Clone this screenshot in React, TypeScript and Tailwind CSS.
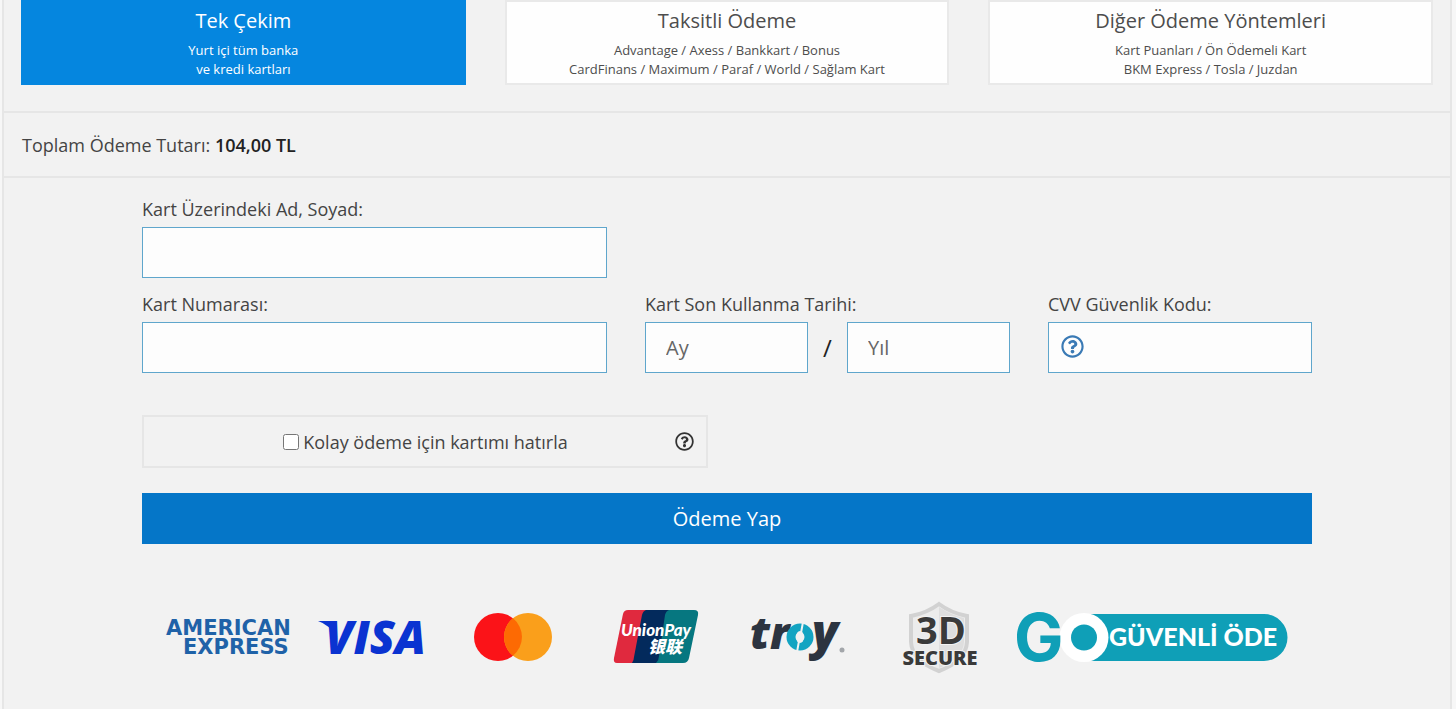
import { FaRegQuestionCircle } from "react-icons/fa";

const tabs = [
  {
    title: "Tek Çekim",
    lines: ["Yurt içi tüm banka", "ve kredi kartları"],
    active: true,
  },
  {
    title: "Taksitli Ödeme",
    lines: [
      "Advantage / Axess / Bankkart / Bonus",
      "CardFinans / Maximum / Paraf / World / Sağlam Kart",
    ],
    active: false,
  },
  {
    title: "Diğer Ödeme Yöntemleri",
    lines: ["Kart Puanları / Ön Ödemeli Kart", "BKM Express / Tosla / Juzdan"],
    active: false,
  },
];

const inputClass =
  "h-[51px] w-full min-w-0 border border-[#5fa6cc] bg-[#fdfdfd] px-5 text-xl text-[#444] placeholder:text-[#666] outline-none";

const labelClass = "mb-[5px] block text-lg leading-[26px]";

const PaymentTabs = () => {
  return (
    <div className="grid grid-cols-3 gap-[39px] px-[17px] pb-[26px]">
      {tabs.map((tab) => (
        <button
          key={tab.title}
          type="button"
          className={
            tab.active
              ? "h-[85px] border-2 border-[#0586df] bg-[#0586df] text-white"
              : "h-[85px] border-2 border-[#e9e9e9] bg-[#fefefe] text-[#4d4d4d]"
          }
        >
          <span className="mb-[6px] block text-xl leading-[28px]">{tab.title}</span>
          {tab.lines.map((line) => (
            <span key={line} className="block text-[13px] leading-[19px]">
              {line}
            </span>
          ))}
        </button>
      ))}
    </div>
  );
};

const AmexLogo = () => (
  <svg width="126" height="80" viewBox="0 -5 126 80" role="img" aria-label="American Express">
    <g fill="#1f62a8" fontFamily="'DejaVu Sans', sans-serif" fontWeight="700" fontSize="21">
      <text x="1" y="33">AMERICAN</text>
      <text x="18" y="52">EXPRESS</text>
    </g>
  </svg>
);

const VisaLogo = () => (
  <svg width="110" height="80" viewBox="0 -5 110 80" role="img" aria-label="Visa">
    <path d="M2 19 H16 L19 34 Q14 23 2 19 Z" fill="#0a33d1" />
    <text
      x="9"
      y="52"
      fill="#0a33d1"
      fontFamily="'Open Sans', sans-serif"
      fontStyle="italic"
      fontWeight="800"
      fontSize="46"
    >
      VISA
    </text>
  </svg>
);

const MastercardLogo = () => (
  <svg width="80" height="80" viewBox="0 -5 80 80" role="img" aria-label="Mastercard">
    <circle cx="25" cy="35" r="24" fill="#fb1318" />
    <circle cx="55" cy="35" r="24" fill="#fa9f1b" />
    <path d="M40 16.3 A24 24 0 0 1 40 53.7 A24 24 0 0 1 40 16.3 Z" fill="#fd6a03" />
  </svg>
);

const UnionPayLogo = () => (
  <svg width="88" height="80" viewBox="0 -5 88 80" role="img" aria-label="UnionPay">
    <path d="M16 8 H38 L25 61 H5 Q1 61 2 56 L11 12 Q12 8 16 8 Z" fill="#e0293e" />
    <path d="M34 8 H62 L48 61 H20 Q22 58 22 55 L30 13 Q31 9 34 8 Z" fill="#032a5c" />
    <path d="M57 8 H82 Q87 8 86 13 L77 56 Q76 61 71 61 H44 Q47 58 47 54 L53 13 Q54 9 57 8 Z" fill="#067780" />
    <text x="9" y="34" fill="#fff" fontFamily="Lato, sans-serif" fontStyle="italic" fontWeight="900" fontSize="17">
      UnionPay
    </text>
    <text x="36" y="51" fill="#fff" fontFamily="'Noto Sans CJK SC', sans-serif" fontStyle="italic" fontWeight="900" fontSize="17">
      银联
    </text>
  </svg>
);

const TroyLogo = () => (
  <svg width="98" height="80" viewBox="0 -5 98 80" role="img" aria-label="Troy">
    <g fill="#2c3440" fontFamily="'Open Sans', sans-serif" fontStyle="italic" fontWeight="800">
      <text x="1" y="47" fontSize="44">tr</text>
      <text x="63" y="47" fontSize="48">y</text>
    </g>
    <circle cx="51" cy="35" r="9" fill="none" stroke="#13a4c2" strokeWidth="9" />
    <ellipse cx="51" cy="35" rx="4" ry="6" fill="#f2f2f2" />
    <path d="M54 20 L52 31 M50 39 L48 50" stroke="#f2f2f2" strokeWidth="2" />
    <circle cx="93" cy="48" r="2.5" fill="#a3a6aa" />
  </svg>
);

const SecureLogo = () => (
  <svg width="80" height="80" viewBox="0 -5 80 80" role="img" aria-label="3D Secure">
    <path d="M38 2 Q50 11 66 14 V40 Q65 59 38 69 Q11 59 10 40 V14 Q26 11 38 2 Z" fill="#ececec" stroke="#d2d2d2" strokeWidth="4" />
    <path d="M38 5 Q50 13 63 16 V40 Q62 57 38 66 Z" fill="#dedede" />
    <g fill="#3a3a3a" fontFamily="'Open Sans', sans-serif" fontWeight="700" stroke="#f2f2f2" strokeWidth="2" paintOrder="stroke" textAnchor="middle">
      <text x="40" y="42" fontSize="38">3D</text>
      <text x="39" y="63" fontSize="20" fontWeight="800">SECURE</text>
    </g>
  </svg>
);

const GoLogo = () => (
  <svg width="282" height="84" viewBox="-1 -7 282 84" className="-my-[2px]" role="img" aria-label="GO Güvenli Öde">
    <path d="M70 12 H249 A23.5 23.5 0 0 1 249 59 H70 Z" fill="#0f9fb7" />
    <circle cx="69" cy="35.5" r="24.5" fill="#fff" />
    <circle cx="69" cy="35.5" r="13" fill="#0f9fb7" />
    <text x="-1" y="59" fill="#0f9fb7" fontFamily="Inter, sans-serif" fontWeight="700" fontSize="66">
      G
    </text>
    <text x="94" y="44" fill="#fff" fontFamily="Lato, sans-serif" fontWeight="900" fontSize="25">
      GÜVENLİ ÖDE
    </text>
  </svg>
);

const CardForm = () => {
  return (
    <form className="px-[138px] pt-[18px]">
      <div className="grid grid-cols-[465fr_365fr_264fr] gap-x-[38px] gap-y-[13px]">
        <div>
          <label htmlFor="holder" className={labelClass}>
            Kart Üzerindeki Ad, Soyad:
          </label>
          <input id="holder" type="text" className={inputClass} />
        </div>
        <div className="col-start-1">
          <label htmlFor="number" className={labelClass}>
            Kart Numarası:
          </label>
          <input id="number" type="text" className={inputClass} />
        </div>
        <div>
          <label htmlFor="month" className={labelClass}>
            Kart Son Kullanma Tarihi:
          </label>
          <div className="flex items-center">
            <input id="month" type="text" placeholder="Ay" className={inputClass} />
            <span className="w-[39px] shrink-0 text-center text-2xl text-[#222]">/</span>
            <input type="text" placeholder="Yıl" aria-label="Yıl" className={inputClass} />
          </div>
        </div>
        <div>
          <label htmlFor="cvv" className={labelClass}>
            CVV Güvenlik Kodu:
          </label>
          <div className="relative">
            <FaRegQuestionCircle className="absolute top-[13px] left-[13px] size-[23px] text-[#3a7ab5]" />
            <input id="cvv" type="text" className={inputClass + " pl-[48px]"} />
          </div>
        </div>
      </div>

      <div className="mt-[42px] flex h-[53px] w-[566px] items-center border-2 border-[#e6e6e6] pr-3 pl-8">
        <label className="flex flex-1 items-center justify-center gap-1 text-lg">
          <input type="checkbox" className="size-4" />
          Kolay ödeme için kartımı hatırla
        </label>
        <FaRegQuestionCircle className="size-[19px] text-[#333]" />
      </div>

      <button type="submit" className="mt-[25px] h-[51px] w-full bg-[#0576c8] text-xl text-white">
        Ödeme Yap
      </button>
    </form>
  );
};

const App = () => {
  return (
    <div className="min-h-screen bg-[#f7f7f7] pr-1 pl-[2px] font-['Open_Sans',sans-serif] text-[#444]">
      <main className="min-h-screen border-x-2 border-[#e6e6e6] bg-[#f2f2f2]">
        <PaymentTabs />
        <div className="flex h-[67px] items-center border-y-2 border-[#e6e6e6] px-[18px] text-lg">
          <p>
            Toplam Ödeme Tutarı: <strong className="font-semibold text-[#222]">104,00 TL</strong>
          </p>
        </div>
        <CardForm />
        <div className="grid grid-cols-[repeat(6,1fr)_2fr] justify-items-center px-[153px] pt-[53px]">
          <AmexLogo />
          <VisaLogo />
          <MastercardLogo />
          <UnionPayLogo />
          <TroyLogo />
          <SecureLogo />
          <GoLogo />
        </div>
      </main>
    </div>
  );
};

export default App;
